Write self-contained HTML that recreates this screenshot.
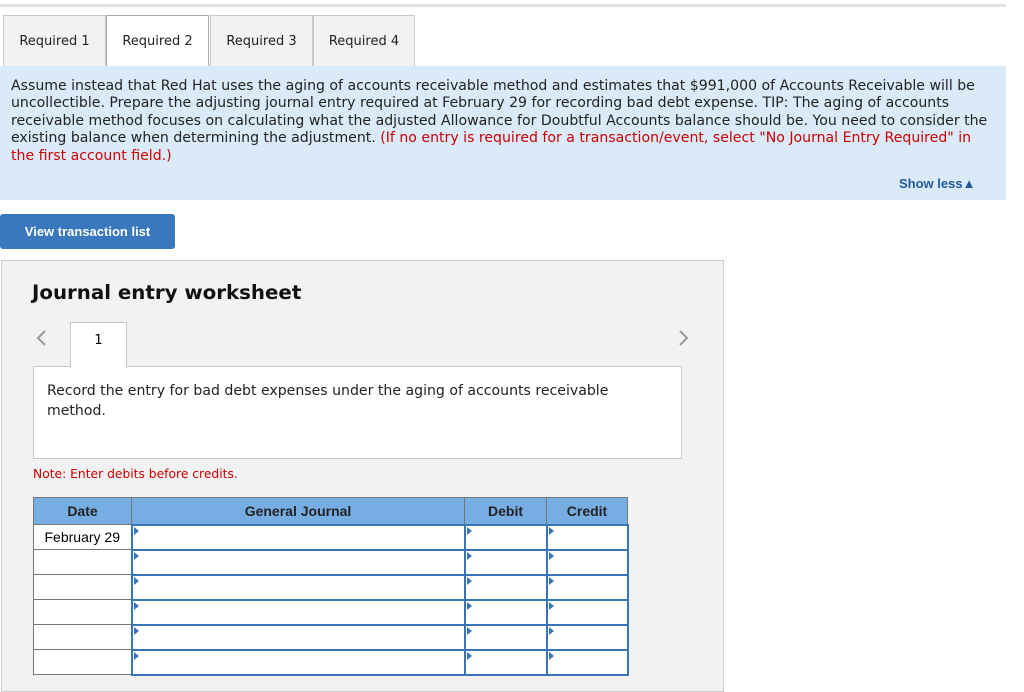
<!DOCTYPE html>
<html><head><style>
body{margin:0;width:1024px;height:684px;overflow:hidden;background:#fff;font-family:"DejaVu Sans",Verdana,sans-serif;position:relative}
.abs{position:absolute}
.tab{position:absolute;top:15px;height:50px;background:#f2f2f2;border:1px solid #c8c8c8;border-bottom:none;font-size:13px;line-height:52px;text-align:center;color:#222}
.tab.on{background:#fff;border-color:#aaa;height:52px}
.info{left:0;top:66px;width:1006px;height:134px;background:#dbeaf8}
.info p{margin:0;padding:12px 10px 0 11px;font-size:14.1px;line-height:17.4px;color:#222}
.red{color:#c00}
table{border-collapse:collapse;position:absolute;left:33px;top:497px;font-family:"Liberation Sans",Arial,sans-serif;table-layout:fixed}
td,th{padding:0;border:1px solid #777}
tr{height:25px}
th{background:#76aee3;font-size:14px;color:#222}
tr.h{height:27px}
td.in{border:2px solid #3a74b8;background:#fff;position:relative}
td.in:before{content:"";position:absolute;left:1px;top:1px;border-left:5px solid #3a74b8;border-top:4px solid transparent;border-bottom:4px solid transparent}
td.d{background:#fff;font-size:14px;text-align:center}
</style></head><body>
<div class="abs" style="left:0;top:4px;width:1006px;height:3px;background:#e0e0e0"></div>
<div class="tab" style="left:3px;width:101px">Required 1</div>
<div class="tab on" style="left:106px;width:101px">Required 2</div>
<div class="tab" style="left:210px;width:101px">Required 3</div>
<div class="tab" style="left:313px;width:100px">Required 4</div>
<div class="abs info"><p>Assume instead that Red Hat uses the aging of accounts receivable method and estimates that $991,000 of Accounts Receivable will be uncollectible. Prepare the adjusting journal entry required at February 29 for recording bad debt expense. TIP: The aging of accounts receivable method focuses on calculating what the adjusted Allowance for Doubtful Accounts balance should be. You need to consider the existing balance when determining the adjustment. <span class="red">(If no entry is required for a transaction/event, select "No Journal Entry Required" in the first account field.)</span></p>
<div class="abs" style="left:899px;top:110px;font-family:'Liberation Sans',Arial,sans-serif;font-size:13px;font-weight:bold;color:#1f5a9e">Show less&#9650;</div></div>
<div class="abs" style="left:0;top:214px;width:175px;height:35px;background:#3a78bd;border-radius:3px;color:#fff;font-weight:bold;font-family:'Liberation Sans',Arial,sans-serif;font-size:13px;line-height:35px;text-align:center">View transaction list</div>
<div class="abs" style="left:1px;top:260px;width:721px;height:430px;background:#f2f2f2;border:1px solid #ccc"></div>
<div class="abs" style="left:32px;top:281px;font-size:19.8px;font-weight:bold;color:#111">Journal entry worksheet</div>
<svg class="abs" style="left:35px;top:329px" width="14" height="18"><path d="M10 2 L3 9 L10 16" stroke="#999" stroke-width="2" fill="none"/></svg>
<svg class="abs" style="left:677px;top:329px" width="14" height="18"><path d="M3 2 L10 9 L3 16" stroke="#999" stroke-width="2" fill="none"/></svg>
<div class="abs" style="left:33px;top:366px;width:647px;height:91px;background:#fff;border:1px solid #c8c8c8"></div>
<div class="abs" style="left:70px;top:322px;width:55px;height:45px;background:#fff;border:1px solid #c8c8c8;border-bottom:none;text-align:center;line-height:36px;font-size:13px">1</div>
<div class="abs" style="left:47px;top:381px;width:620px;font-size:14.1px;line-height:20px;color:#222">Record the entry for bad debt expenses under the aging of accounts receivable method.</div>
<div class="abs" style="left:33px;top:467px;font-size:12.3px;color:#c00">Note: Enter debits before credits.</div>
<table>
<tr class="h"><th style="width:97px">Date</th><th style="width:332px">General Journal</th><th style="width:81px">Debit</th><th style="width:80px">Credit</th></tr>
<tr><td class="d">February 29</td><td class="in"></td><td class="in"></td><td class="in"></td></tr>
<tr><td class="d"></td><td class="in"></td><td class="in"></td><td class="in"></td></tr>
<tr><td class="d"></td><td class="in"></td><td class="in"></td><td class="in"></td></tr>
<tr><td class="d"></td><td class="in"></td><td class="in"></td><td class="in"></td></tr>
<tr><td class="d"></td><td class="in"></td><td class="in"></td><td class="in"></td></tr>
<tr><td class="d"></td><td class="in"></td><td class="in"></td><td class="in"></td></tr>
</table>
</body></html>
